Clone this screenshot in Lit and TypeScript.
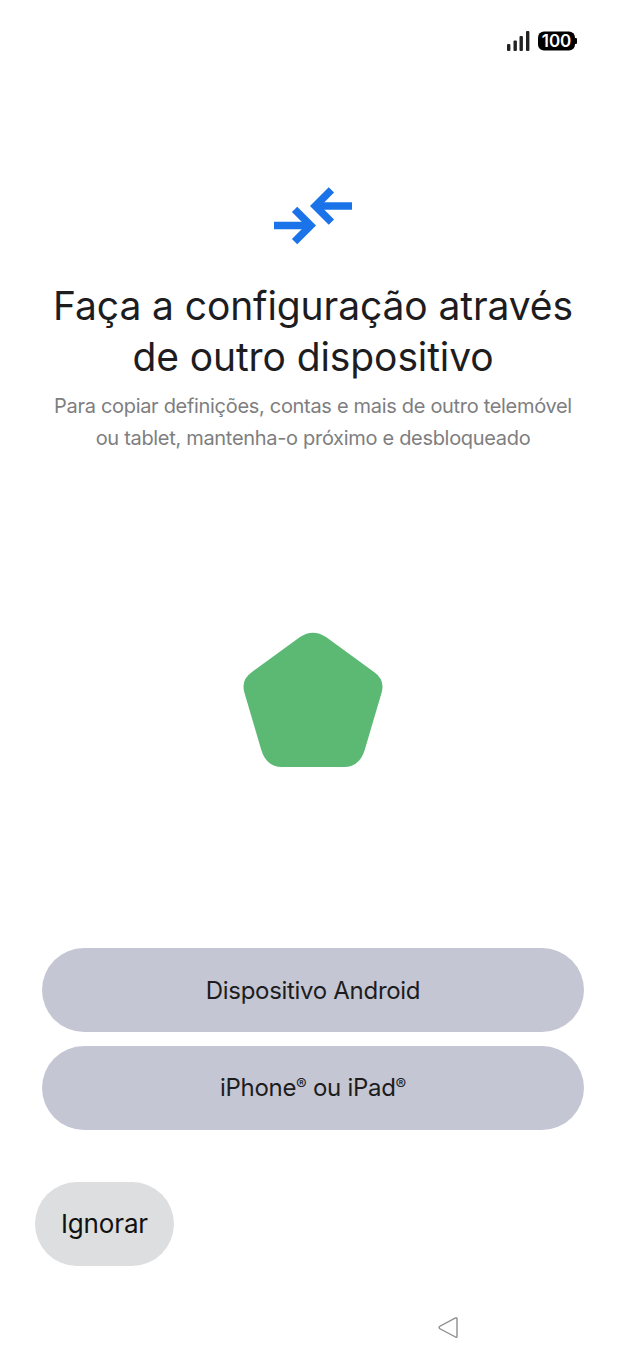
import { LitElement, html, css } from 'lit'
import { customElement } from 'lit/decorators.js'

@customElement('app-root')
export class AppRoot extends LitElement {
  static styles = css`
    :host {
      display: block;
      width: 626px;
      height: 1366px;
      background: #fff;
      font-family: Inter, "Liberation Sans", sans-serif;
      color: #1c1c1e;
      overflow: hidden;
    }
    .page {
      height: 1366px;
      display: flex;
      flex-direction: column;
    }
    .status {
      height: 30px;
      padding: 30px 48px 0 0;
      display: flex;
      justify-content: flex-end;
      align-items: flex-start;
      gap: 8px;
    }
    .hero {
      margin-top: 126px;
      display: flex;
      flex-direction: column;
      align-items: center;
    }
    h1 {
      margin: 34px 0 0;
      font-size: 39px;
      line-height: 51px;
      font-weight: 400;
      letter-spacing: -0.1px;
      text-align: center;
      color: #1d1d1f;
    }
    .sub {
      margin: 8px 0 0;
      font-size: 20px;
      line-height: 32px;
      letter-spacing: -0.31px;
      text-align: center;
      color: #7e7e80;
    }
    .shape {
      display: block;
      margin: 177.5px auto 0;
    }
    .actions {
      margin-top: 180.5px;
      padding: 0 42px;
      display: flex;
      flex-direction: column;
      gap: 13.5px;
    }
    .btn {
      height: 84px;
      border-radius: 42px;
      background: #c4c6d4;
      display: flex;
      align-items: center;
      justify-content: center;
      font-size: 24px;
      letter-spacing: -0.3px;
      font-weight: 400;
      color: #1d1d20;
    }
    sup {
      font-size: 16px;
      line-height: 0;
      vertical-align: 6px;
    }
    .skip {
      margin: 52px 0 0 35px;
      width: 139px;
      height: 84px;
      border-radius: 42px;
      background: #dddee0;
      display: flex;
      align-items: center;
      justify-content: center;
      font-size: 26px;
      letter-spacing: -0.15px;
      color: #111;
    }
    .nav {
      margin: 50px 0 0 437px;
      display: block;
    }
  `

  render() {
    return html`
      <div class="page">
        <div class="status">
          <svg width="24" height="22" viewBox="0 0 24 22">
            <rect x="1" y="14" width="3.4" height="7" rx="1" fill="#222" />
            <rect x="7.5" y="10.500" width="3.4" height="10.500" rx="1" fill="#222" />
            <rect x="13.500" y="6" width="3.4" height="15" rx="1" fill="#222" />
            <rect x="20" y="1" width="3.4" height="20" rx="1" fill="#222" />
          </svg>
          <svg width="40" height="22" viewBox="0 0 40 22">
            <rect x="0" y="1.500" width="37" height="19" rx="6" fill="#000" />
            <rect x="36.500" y="8" width="2.500" height="6" rx="1" fill="#000" />
            <text
              x="18.500"
              y="17"
              text-anchor="middle"
              font-family="Inter, 'Liberation Sans', sans-serif"
              font-size="17"
              font-weight="600"
              fill="#fff"
            >100</text>
          </svg>
        </div>
        <div class="hero">
          <svg width="80" height="60" viewBox="0 0 80 60">
            <g fill="none" stroke="#1a73e8" stroke-width="7.5" stroke-linejoin="miter">
              <path d="M1 39.500 H38" />
              <path d="M21.600 23.400 L37.700 39.500 L21.600 55.600" />
              <path d="M79 20 H42" />
              <path d="M58.400 3.900 L42.300 20 L58.400 36.100" />
            </g>
          </svg>
          <h1>Faça a configuração através<br />de outro dispositivo</h1>
          <p class="sub">
            Para copiar definições, contas e mais de outro telemóvel<br />ou tablet, mantenha-o próximo e
            desbloqueado
          </p>
        </div>
        <svg class="shape" width="142" height="136" viewBox="0 0 142 136">
          <path
            d="M58 5 Q71 -3.500 84 5 L132 40 Q143.500 48 139.500 61 L123 117 Q118 135 102 135 L40 135 Q24 135 19 117 L2.500 61 Q-1.500 48 10 40 Z"
            fill="#5cb974"
          />
        </svg>
        <div class="actions">
          <div class="btn">Dispositivo Android</div>
          <div class="btn"><span>iPhone<sup>®</sup> ou iPad<sup>®</sup></span></div>
        </div>
        <div class="skip">Ignorar</div>
        <svg class="nav" width="24" height="24" viewBox="0 0 24 24">
          <path
            d="M20 2.500 L20 20.500 Q20 22 18.500 21 L2.500 12.500 Q1.500 11.500 2.500 10.500 L18.500 2 Q20 1.500 20 2.500 Z"
            fill="none"
            stroke="#8e8e90"
            stroke-width="1.4"
          />
        </svg>
      </div>
    `
  }
}
